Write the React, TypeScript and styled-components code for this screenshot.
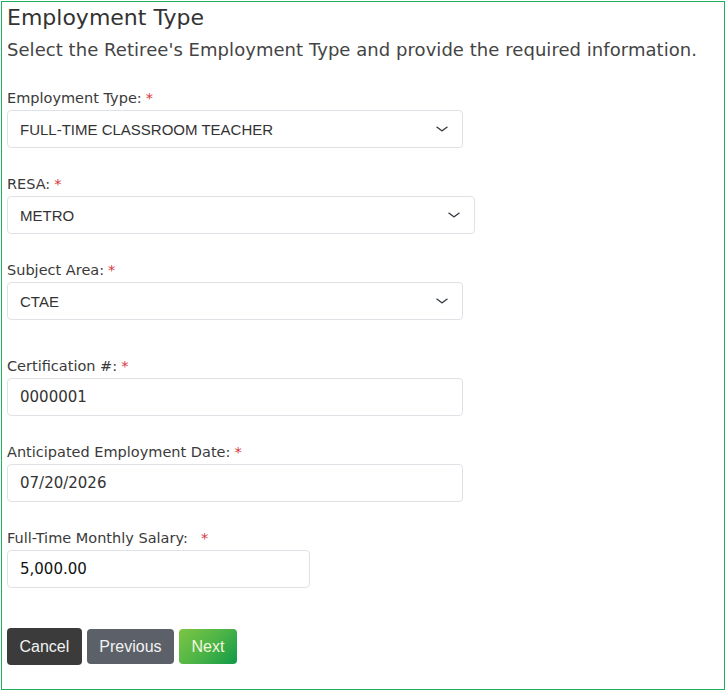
import React from "react";
import styled, { createGlobalStyle } from "styled-components";

const Global = createGlobalStyle`
  html, body { margin: 0; padding: 0; background: #fff; }
  * { box-sizing: border-box; }
`;

const Frame = styled.div`
  margin: 1px;
  width: 724px;
  height: 689px;
  border: 1px solid #1fb25e;
  padding: 0 5px;
  font-family: "DejaVu Sans", sans-serif;
  color: #3a3a3a;
`;

const Title = styled.h2`
  margin: 0;
  padding-top: 2px;
  font-size: 22px;
  line-height: 28px;
  font-weight: 500;
  color: #333;
`;

const Lead = styled.p`
  margin: 6px 0 0;
  font-size: 18px;
  line-height: 24px;
  color: #444;
  letter-spacing: 0.05px;
`;

const Form = styled.div`
  display: flex;
  flex-direction: column;
  margin-top: 26px;
`;

const Group = styled.div<{ $extra?: number }>`
  display: flex;
  flex-direction: column;
  margin-bottom: ${(p) => 26 + (p.$extra || 0)}px;
`;

const Label = styled.label`
  font-size: 14.5px;
  line-height: 20px;
  margin-bottom: 2px;
  color: #3a3a3a;
`;

const Req = styled.span`
  color: #d9363e;
  margin-left: 4px;
`;

const SelectBox = styled.div<{ $w: number }>`
  position: relative;
  width: ${(p) => p.$w}px;
  height: 38px;
  border: 1px solid #dee2e6;
  border-radius: 4px;
  display: flex;
  align-items: center;
  padding: 0 36px 0 12px;
  font-family: "Liberation Sans", Arial, sans-serif;
  font-size: 15px;
  color: #333;
`;

const Chevron = styled.svg`
  position: absolute;
  right: 12px;
  top: 50%;
  margin-top: -6px;
  width: 16px;
  height: 12px;
`;

const InputBox = styled.div<{ $w: number; $dark?: boolean }>`
  width: ${(p) => p.$w}px;
  height: 38px;
  border: 1px solid #dee2e6;
  border-radius: 4px;
  display: flex;
  align-items: center;
  padding: 0 12px;
  font-size: 15px;
  color: ${(p) => (p.$dark ? "#111" : "#333")};
`;

const Buttons = styled.div`
  display: flex;
  align-items: center;
  gap: 5px;
  margin-top: 14px;
`;

const Btn = styled.button<{ $kind: "dark" | "gray" | "green" }>`
  font-family: "Liberation Sans", Arial, sans-serif;
  font-size: 16px;
  line-height: 24px;
  padding: 0 12.5px;
  border: none;
  border-radius: 4px;
  height: ${(p) => (p.$kind === "dark" ? 37 : 35)}px;
  color: ${(p) => (p.$kind === "green" ? "#f2f7dc" : "#f2f2f2")};
  background: ${(p) =>
    p.$kind === "dark"
      ? "#3b3b3b"
      : p.$kind === "gray"
      ? "#5c6169"
      : "linear-gradient(135deg, #7cc544 0%, #4fb547 50%, #0f9a47 100%)"};
`;

const Select = ({ w, value }: { w: number; value: string }) => (
  <SelectBox $w={w}>
    {value}
    <Chevron viewBox="0 0 16 16" preserveAspectRatio="none">
      <path d="M3 5.5l5 5 5-5" fill="none" stroke="#343a40" strokeWidth="1.6" strokeLinecap="round" strokeLinejoin="round" />
    </Chevron>
  </SelectBox>
);

export default function App() {
  return (
    <>
      <Global />
      <Frame>
        <Title>Employment Type</Title>
        <Lead>Select the Retiree's Employment Type and provide the required information.</Lead>
        <Form>
          <Group>
            <Label>Employment Type:<Req>*</Req></Label>
            <Select w={456} value="FULL-TIME CLASSROOM TEACHER" />
          </Group>
          <Group>
            <Label>RESA:<Req>*</Req></Label>
            <Select w={468} value="METRO" />
          </Group>
          <Group $extra={10}>
            <Label>Subject Area:<Req>*</Req></Label>
            <Select w={456} value="CTAE" />
          </Group>
          <Group>
            <Label>Certification #:<Req>*</Req></Label>
            <InputBox $w={456}>0000001</InputBox>
          </Group>
          <Group>
            <Label>Anticipated Employment Date:<Req>*</Req></Label>
            <InputBox $w={456}>07/20/2026</InputBox>
          </Group>
          <Group>
            <Label>Full-Time Monthly Salary: <Req>&nbsp;*</Req></Label>
            <InputBox $w={303} $dark>5,000.00</InputBox>
          </Group>
        </Form>
        <Buttons>
          <Btn $kind="dark">Cancel</Btn>
          <Btn $kind="gray">Previous</Btn>
          <Btn $kind="green">Next</Btn>
        </Buttons>
      </Frame>
    </>
  );
}
